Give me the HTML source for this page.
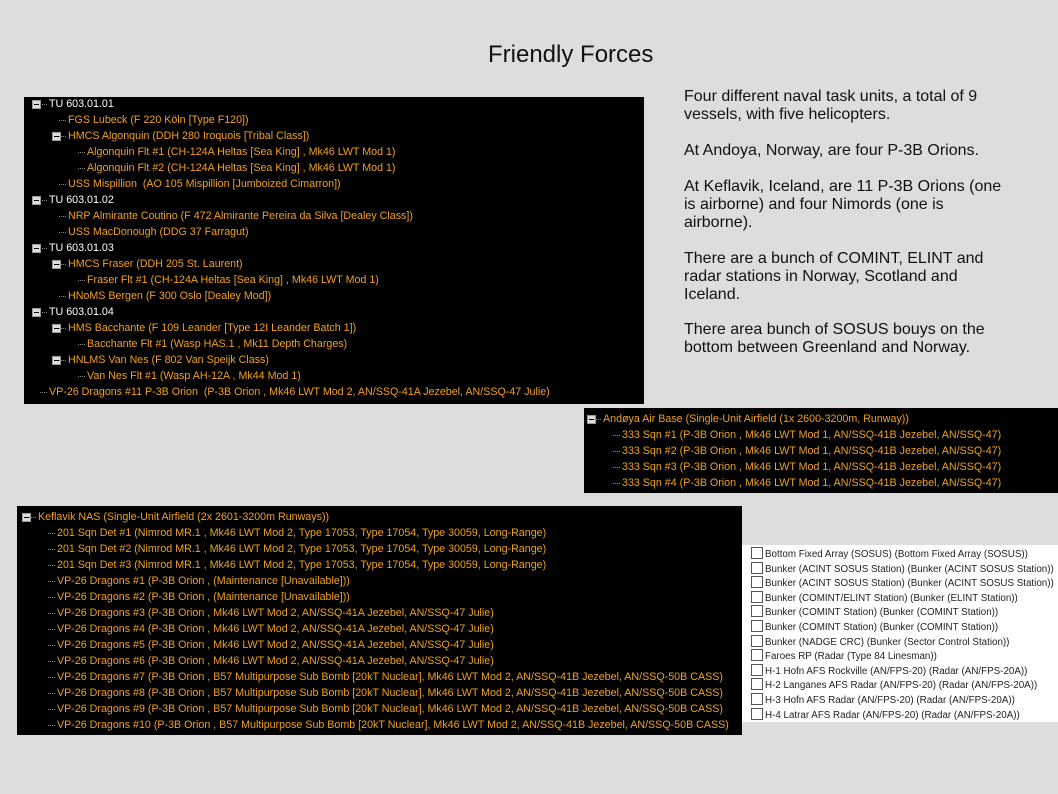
<!DOCTYPE html>
<html><head><meta charset="utf-8"><style>
body{margin:0;width:1058px;height:794px;background:#dddddd;position:relative;overflow:hidden;font-family:"Liberation Sans",sans-serif}
.box{position:absolute;background:#000}
.r{position:absolute;font-size:10.7px;color:#f0a020;white-space:nowrap;line-height:16px;height:16px}
.w{color:#fff}
.r:before{content:"";position:absolute;left:-9px;top:8px;width:7px;border-top:1px dotted #888}
.e{position:absolute;width:7px;height:7px;background:#ddd;border:1px solid #999}
.e:after{content:"";position:absolute;left:1px;top:3px;width:5px;height:1px;background:#000}
.t{position:absolute;left:684px;font-size:16px;line-height:18px;color:#111;width:325px}
.c{position:absolute;font-size:9.8px;color:#222;white-space:nowrap;line-height:14px}
.c i{display:inline-block;width:10px;height:10px;border:1px solid #555;background:#fff;vertical-align:-2px;margin-right:2px}
</style></head><body>
<div style="position:absolute;left:488px;top:41px;font-size:24px;color:#111">Friendly Forces</div>
<div class="t" style="top:88px">Four different naval task units, a total of 9 vessels, with five helicopters.</div>
<div class="t" style="top:142px">At Andoya, Norway, are four P-3B Orions.</div>
<div class="t" style="top:178px">At Keflavik, Iceland, are 11 P-3B Orions (one is airborne) and four Nimords (one is airborne).</div>
<div class="t" style="top:250px">There are a bunch of COMINT, ELINT and radar stations in Norway, Scotland and Iceland.</div>
<div class="t" style="top:321px">There area bunch of SOSUS bouys on the bottom between Greenland and Norway.</div>

<div class="box" style="left:24px;top:97px;width:620px;height:307px"></div>
<div class="e" style="left:32px;top:100px"></div><div class="r w" style="left:49px;top:96px">TU 603.01.01</div>
<div class="r" style="left:68px;top:112px">FGS Lubeck (F 220 Köln [Type F120])</div>
<div class="e" style="left:52px;top:132px"></div><div class="r" style="left:68px;top:128px">HMCS Algonquin (DDH 280 Iroquois [Tribal Class])</div>
<div class="r" style="left:87px;top:144px">Algonquin Flt #1 (CH-124A Heltas [Sea King] , Mk46 LWT Mod 1)</div>
<div class="r" style="left:87px;top:160px">Algonquin Flt #2 (CH-124A Heltas [Sea King] , Mk46 LWT Mod 1)</div>
<div class="r" style="left:68px;top:176px">USS Mispillion&nbsp; (AO 105 Mispillion [Jumboized Cimarron])</div>
<div class="e" style="left:32px;top:196px"></div><div class="r w" style="left:49px;top:192px">TU 603.01.02</div>
<div class="r" style="left:68px;top:208px">NRP Almirante Coutino (F 472 Almirante Pereira da Silva [Dealey Class])</div>
<div class="r" style="left:68px;top:224px">USS MacDonough (DDG 37 Farragut)</div>
<div class="e" style="left:32px;top:244px"></div><div class="r w" style="left:49px;top:240px">TU 603.01.03</div>
<div class="e" style="left:52px;top:260px"></div><div class="r" style="left:68px;top:256px">HMCS Fraser (DDH 205 St. Laurent)</div>
<div class="r" style="left:87px;top:272px">Fraser Flt #1 (CH-124A Heltas [Sea King] , Mk46 LWT Mod 1)</div>
<div class="r" style="left:68px;top:288px">HNoMS Bergen (F 300 Oslo [Dealey Mod])</div>
<div class="e" style="left:32px;top:308px"></div><div class="r w" style="left:49px;top:304px">TU 603.01.04</div>
<div class="e" style="left:52px;top:324px"></div><div class="r" style="left:68px;top:320px">HMS Bacchante (F 109 Leander [Type 12I Leander Batch 1])</div>
<div class="r" style="left:87px;top:336px">Bacchante Flt #1 (Wasp HAS.1 , Mk11 Depth Charges)</div>
<div class="e" style="left:52px;top:356px"></div><div class="r" style="left:68px;top:352px">HNLMS Van Nes (F 802 Van Speijk Class)</div>
<div class="r" style="left:87px;top:368px">Van Nes Flt #1 (Wasp AH-12A , Mk44 Mod 1)</div>
<div class="r" style="left:49px;top:384px">VP-26 Dragons #11 P-3B Orion&nbsp; (P-3B Orion , Mk46 LWT Mod 2, AN/SSQ-41A Jezebel, AN/SSQ-47 Julie)</div>

<div class="box" style="left:584px;top:408px;width:474px;height:85px"></div>
<div class="e" style="left:587px;top:415px"></div><div class="r" style="left:603px;top:411px">Andøya Air Base (Single-Unit Airfield (1x 2600-3200m, Runway))</div>
<div class="r" style="left:622px;top:427px">333 Sqn #1 (P-3B Orion , Mk46 LWT Mod 1, AN/SSQ-41B Jezebel, AN/SSQ-47)</div>
<div class="r" style="left:622px;top:443px">333 Sqn #2 (P-3B Orion , Mk46 LWT Mod 1, AN/SSQ-41B Jezebel, AN/SSQ-47)</div>
<div class="r" style="left:622px;top:459px">333 Sqn #3 (P-3B Orion , Mk46 LWT Mod 1, AN/SSQ-41B Jezebel, AN/SSQ-47)</div>
<div class="r" style="left:622px;top:475px">333 Sqn #4 (P-3B Orion , Mk46 LWT Mod 1, AN/SSQ-41B Jezebel, AN/SSQ-47)</div>

<div class="box" style="left:17px;top:506px;width:725px;height:229px"></div>
<div class="e" style="left:22px;top:513px"></div><div class="r" style="left:38px;top:509px">Keflavik NAS (Single-Unit Airfield (2x 2601-3200m Runways))</div>
<div class="r" style="left:57px;top:525px">201 Sqn Det #1 (Nimrod MR.1 , Mk46 LWT Mod 2, Type 17053, Type 17054, Type 30059, Long-Range)</div>
<div class="r" style="left:57px;top:541px">201 Sqn Det #2 (Nimrod MR.1 , Mk46 LWT Mod 2, Type 17053, Type 17054, Type 30059, Long-Range)</div>
<div class="r" style="left:57px;top:557px">201 Sqn Det #3 (Nimrod MR.1 , Mk46 LWT Mod 2, Type 17053, Type 17054, Type 30059, Long-Range)</div>
<div class="r" style="left:57px;top:573px">VP-26 Dragons #1 (P-3B Orion , (Maintenance [Unavailable]))</div>
<div class="r" style="left:57px;top:589px">VP-26 Dragons #2 (P-3B Orion , (Maintenance [Unavailable]))</div>
<div class="r" style="left:57px;top:605px">VP-26 Dragons #3 (P-3B Orion , Mk46 LWT Mod 2, AN/SSQ-41A Jezebel, AN/SSQ-47 Julie)</div>
<div class="r" style="left:57px;top:621px">VP-26 Dragons #4 (P-3B Orion , Mk46 LWT Mod 2, AN/SSQ-41A Jezebel, AN/SSQ-47 Julie)</div>
<div class="r" style="left:57px;top:637px">VP-26 Dragons #5 (P-3B Orion , Mk46 LWT Mod 2, AN/SSQ-41A Jezebel, AN/SSQ-47 Julie)</div>
<div class="r" style="left:57px;top:653px">VP-26 Dragons #6 (P-3B Orion , Mk46 LWT Mod 2, AN/SSQ-41A Jezebel, AN/SSQ-47 Julie)</div>
<div class="r" style="left:57px;top:669px">VP-26 Dragons #7 (P-3B Orion , B57 Multipurpose Sub Bomb [20kT Nuclear], Mk46 LWT Mod 2, AN/SSQ-41B Jezebel, AN/SSQ-50B CASS)</div>
<div class="r" style="left:57px;top:685px">VP-26 Dragons #8 (P-3B Orion , B57 Multipurpose Sub Bomb [20kT Nuclear], Mk46 LWT Mod 2, AN/SSQ-41B Jezebel, AN/SSQ-50B CASS)</div>
<div class="r" style="left:57px;top:701px">VP-26 Dragons #9 (P-3B Orion , B57 Multipurpose Sub Bomb [20kT Nuclear], Mk46 LWT Mod 2, AN/SSQ-41B Jezebel, AN/SSQ-50B CASS)</div>
<div class="r" style="left:57px;top:717px">VP-26 Dragons #10 (P-3B Orion , B57 Multipurpose Sub Bomb [20kT Nuclear], Mk46 LWT Mod 2, AN/SSQ-41B Jezebel, AN/SSQ-50B CASS)</div>

<div style="position:absolute;left:742px;top:545px;width:316px;height:177px;background:#fff"></div>
<div class="c" style="left:751px;top:547px"><i></i>Bottom Fixed Array (SOSUS) (Bottom Fixed Array (SOSUS))</div>
<div class="c" style="left:751px;top:561.6px"><i></i>Bunker (ACINT SOSUS Station) (Bunker (ACINT SOSUS Station))</div>
<div class="c" style="left:751px;top:576.2px"><i></i>Bunker (ACINT SOSUS Station) (Bunker (ACINT SOSUS Station))</div>
<div class="c" style="left:751px;top:590.8px"><i></i>Bunker (COMINT/ELINT Station) (Bunker (ELINT Station))</div>
<div class="c" style="left:751px;top:605.4px"><i></i>Bunker (COMINT Station) (Bunker (COMINT Station))</div>
<div class="c" style="left:751px;top:620px"><i></i>Bunker (COMINT Station) (Bunker (COMINT Station))</div>
<div class="c" style="left:751px;top:634.6px"><i></i>Bunker (NADGE CRC) (Bunker (Sector Control Station))</div>
<div class="c" style="left:751px;top:649.2px"><i></i>Faroes RP (Radar (Type 84 Linesman))</div>
<div class="c" style="left:751px;top:663.8px"><i></i>H-1 Hofn AFS Rockville (AN/FPS-20) (Radar (AN/FPS-20A))</div>
<div class="c" style="left:751px;top:678.4px"><i></i>H-2 Langanes AFS Radar (AN/FPS-20) (Radar (AN/FPS-20A))</div>
<div class="c" style="left:751px;top:693px"><i></i>H-3 Hofn AFS Radar (AN/FPS-20) (Radar (AN/FPS-20A))</div>
<div class="c" style="left:751px;top:707.6px"><i></i>H-4 Latrar AFS Radar (AN/FPS-20) (Radar (AN/FPS-20A))</div>
</body></html>
